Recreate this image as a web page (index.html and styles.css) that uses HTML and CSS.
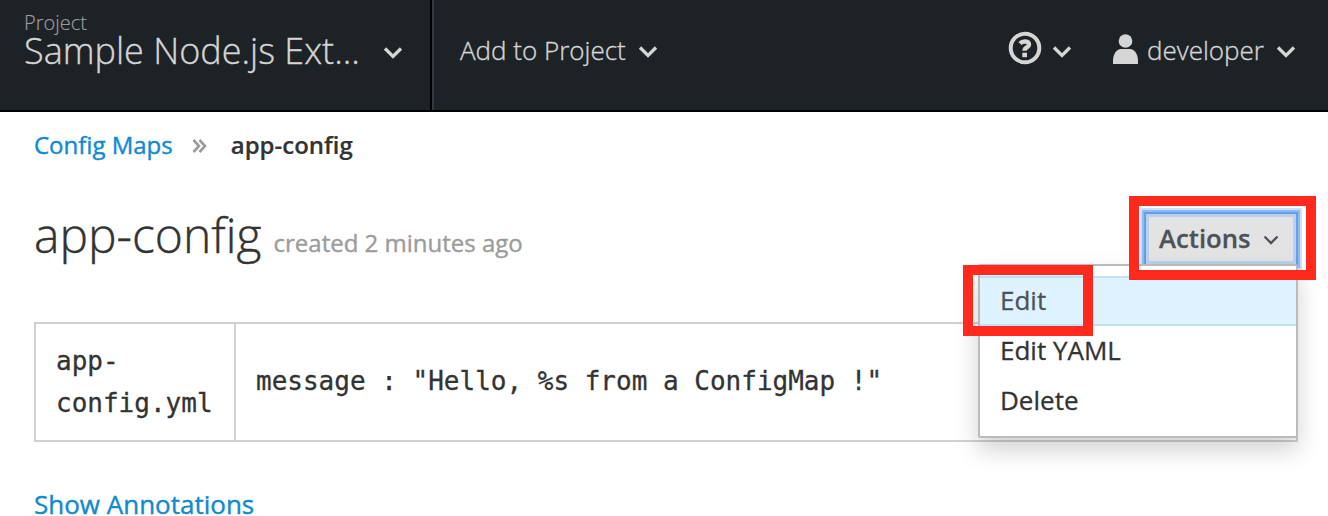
FILE: index.html
```html
<!DOCTYPE html>
<html lang="en">
<head>
<meta charset="utf-8">
<title>app-config</title>
<link rel="stylesheet" href="styles.css">
</head>
<body>
<header class="topbar">
  <div class="project">
    <div class="project-label">Project</div>
    <div class="project-row"><span class="project-name">Sample Node.js Ext...</span>
      <svg class="chev" viewBox="0 0 20 14"><path d="M2 2.500l8 8 8-8"/></svg></div>
  </div>
  <div class="add"><span>Add to Project</span><svg class="chev" viewBox="0 0 20 14"><path d="M2 2.500l8 8 8-8"/></svg></div>
  <div class="help">
    <svg class="help-icon" viewBox="0 0 34 34"><circle cx="17" cy="17" r="14.300"/><path class="question" d="M12 12.500c2.500-2.700 9-3 9 1.200 0 3-4.500 2.500-4.500 6"/><rect class="dot" x="14.300" y="21.700" width="4.700" height="4.500"/></svg>
    <svg class="chev" viewBox="0 0 20 14"><path d="M2 2.500l8 8 8-8"/></svg>
  </div>
  <div class="user">
    <svg class="user-icon" viewBox="0 0 25 30"><circle cx="12.500" cy="7" r="6.800"/><path d="M0 30v-3c0-7 3.500-12 8-12h9c4.500 0 8 5 8 12v3z"/></svg>
    <span>developer</span><svg class="chev" viewBox="0 0 20 14"><path d="M2 2.500l8 8 8-8"/></svg>
  </div>
</header>
<main class="content">
  <nav class="crumbs"><a>Config Maps</a>
    <svg class="sep" viewBox="0 0 15 14"><path d="M1.500 1l5.500 6-5.500 6M7.500 1l5.500 6-5.500 6"/></svg>
    <strong>app-config</strong></nav>
  <div class="heading">
    <h1>app-config</h1><small>created 2 minutes ago</small>
    <div class="actions-wrap">
      <button class="actions"><span>Actions</span><svg class="small-chev" viewBox="0 0 16 10"><path d="M1.500 1.500l6.500 6.500 6.500-6.500"/></svg></button>
      <div class="menu"><div class="item active">Edit</div><div class="item">Edit YAML</div><div class="item">Delete</div></div>
      <div class="mark mark-actions"></div>
      <div class="mark mark-edit"></div>
    </div>
  </div>
  <div class="config"><div class="key">app-<br>config.yml</div><div class="value">message : "Hello, %s from a ConfigMap !"</div></div>
  <a class="annotations">Show Annotations</a>
</main>
</body>
</html>
```
FILE: styles.css
```css
* { box-sizing: border-box; }
body { margin: 0; height: 516px; overflow: hidden; background: #fff; color: #333; font-family: "Open Sans", sans-serif; font-size: 25px; }
svg { display: block; flex: none; fill: none; stroke: currentColor; }
.topbar { height: 112px; display: flex; background: #1d2226; border-bottom: 2px solid #000; color: #d5d5d5; font-weight: 300; -webkit-text-stroke: .35px; }
.project { width: 432px; padding: 11px 0 0 24px; border-right: 2px solid #000; }
.project-label { font-size: 20px; line-height: 24px; color: #9c9c9c; -webkit-text-stroke: .2px; }
.project-row { display: flex; align-items: center; height: 32px; line-height: 32px; }
.project-name { width: 359px; font-size: 36px; white-space: nowrap; }
.chev { width: 20px; height: 14px; stroke-width: 3.3; margin-top: 3px; }
.add, .help, .user { display: flex; align-items: center; height: 110px; padding-bottom: 10px; }
.add { flex: none; width: 230px; padding-left: 26px; gap: 12px; font-size: 26px; border-left: 2px solid #33393e; }
.help { margin-left: 346px; gap: 10px; }
.help-icon { width: 34px; height: 34px; stroke-width: 4; margin-top: -4px; }
.question { stroke-width: 4.4; }
.dot { fill: currentColor; stroke: none; }
.user { margin-left: 41px; font-size: 26px; }
.user-icon { width: 25px; height: 30px; fill: currentColor; stroke: none; margin: -2px 9px 0 0; }
.user .chev { margin-left: 12px; }
.content { padding: 15px 30px 0 34px; }
.crumbs { display: flex; align-items: center; height: 34px; font-size: 24px; -webkit-text-stroke: .4px; }
a { color: #118acf; }
.crumbs strong { font-weight: 600; margin-left: 24px; -webkit-text-stroke: .2px; }
.sep { width: 15px; height: 14px; margin: 3px 0 0 19px; color: #9c9c9c; stroke-width: 2.6; }
.heading { position: relative; display: flex; align-items: baseline; height: 161px; padding-top: 38px; }
h1 { margin: 0; font-size: 48px; line-height: 72px; font-weight: 300; -webkit-text-stroke: .4px; }
small { position: relative; top: -1px; margin-left: 12px; font-size: 24px; color: #9c9c9c; -webkit-text-stroke: .4px; }
.actions-wrap { position: absolute; right: 0; top: 53px; width: 152px; }
.actions { display: flex; align-items: center; gap: 12px; width: 150px; height: 50px; padding: 0 0 2px 10px; border: 3px solid #b8d1ef; background: #e3e3e3; box-shadow: 0 0 0 2px #66a0e2, 0 0 0 4px #8abcf5, 0 0 0 6px #cce2fc; color: #4d5258; font: 600 25.7px "Open Sans", sans-serif; -webkit-text-stroke: .3px; }
.small-chev { width: 16px; height: 10px; margin-top: 3px; stroke-width: 2.3; }
.menu { position: absolute; z-index: 1; right: 0; top: 50px; width: 320px; height: 174px; padding-top: 10px; background: #fff; border: 2px solid #bbb; border-radius: 2px; box-shadow: 0 12px 24px #0000002e; }
.item { height: 50px; padding-left: 20px; line-height: 48px; font-size: 26px; -webkit-text-stroke: .3px; }
.active { background: #def3ff; border: solid #bee1f4; border-width: 2px 0; color: #4d5258; line-height: 44px; }
.mark { position: absolute; z-index: 2; border: 10px solid #ff2a1d; }
.mark-actions { width: 187px; height: 84px; right: -18px; top: -18px; }
.mark-edit { width: 130px; height: 71px; right: 205px; top: 51px; }
.config { display: flex; height: 120px; border: 2px solid #d1d1d1; font-family: "DejaVu Sans Mono", monospace; font-size: 26px; -webkit-text-stroke: .3px; }
.key { width: 200px; padding: 16px 0 0 20px; border-right: 2px solid #d1d1d1; line-height: 42px; }
.value { padding: 36px 0 0 20px; line-height: 42px; }
.annotations { display: block; margin-top: 43px; line-height: 38px; font-size: 26px; -webkit-text-stroke: .4px; }
```
